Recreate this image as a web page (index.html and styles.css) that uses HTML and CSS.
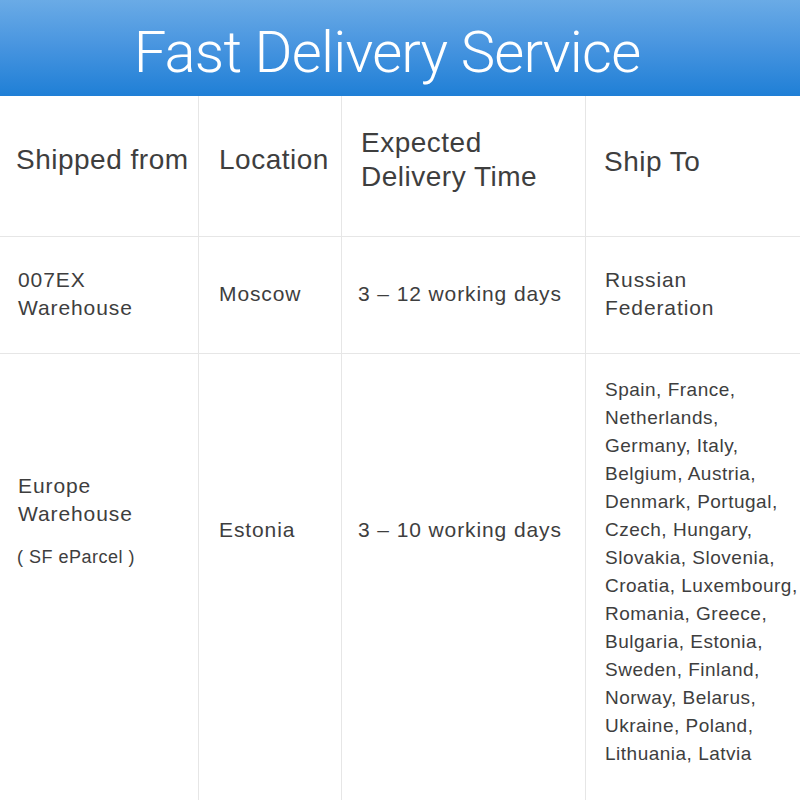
FILE: index.html
```
<!DOCTYPE html>
<html>
<head>
<meta charset="utf-8">
<link rel="stylesheet" href="styles.css">
</head>
<body>
<div class="page">
  <header class="banner"><h1 class="title">Fast Delivery Service</h1></header>
  <div class="table">
    <div class="cell head c1">Shipped from</div>
    <div class="cell head c2">Location</div>
    <div class="cell head c3">Expected<br>Delivery Time</div>
    <div class="cell head c4">Ship To</div>

    <div class="cell r2 c1">007EX<br>Warehouse</div>
    <div class="cell r2 c2">Moscow</div>
    <div class="cell r2 c3">3 – 12 working days</div>
    <div class="cell r2 c4">Russian<br>Federation</div>

    <div class="cell r3 c1 r3-left">Europe<br>Warehouse<span class="sub">( SF eParcel )</span></div>
    <div class="cell r3 c2 r3-mid">Estonia</div>
    <div class="cell r3 c3 r3-mid">3 – 10 working days</div>
    <div class="cell r3 c4 list">Spain, France,<br>Netherlands,<br>Germany, Italy,<br>Belgium, Austria,<br>Denmark, Portugal,<br>Czech, Hungary,<br>Slovakia, Slovenia,<br>Croatia, Luxembourg,<br>Romania, Greece,<br>Bulgaria, Estonia,<br>Sweden, Finland,<br>Norway, Belarus,<br>Ukraine, Poland,<br>Lithuania, Latvia</div>
  </div>
</div>
</body>
</html>
```
FILE: styles.css
```
html, body { margin: 0; padding: 0; background: #fff; }
body { width: 800px; height: 800px; overflow: hidden; font-family: "Liberation Sans", Arial, sans-serif; color: #3e3e3e; }
.page { width: 800px; }
.banner {
  height: 96px;
  background: linear-gradient(to bottom, #6aabe6 0%, #4a96e0 45%, #1f7fd6 100%);
  display: flex; justify-content: center; align-items: flex-start;
}
.title {
  margin: 0; padding-top: 17px; margin-right: 26px;
  font-family: Roboto, "Liberation Sans", sans-serif; font-weight: 300;
  font-size: 58px; line-height: 70px; letter-spacing: -0.8px;
  color: #fff;
}
.table {
  display: grid;
  grid-template-columns: 198px 143px 244px 215px;
  grid-template-rows: 141px 117px 460px;
}
.cell {
  border-left: 1px solid #e6e6e6;
  border-bottom: 1px solid #e6e6e6;
  display: flex; flex-direction: column; justify-content: center;
  font-size: 21px; line-height: 28px;
  padding: 0 0 0 18px;
  box-sizing: border-box;
  letter-spacing: 0.9px;
}
.c1 { border-left: none; padding-left: 18px; }
.c2 { padding-left: 20px; }
.c3 { padding-left: 16px; }
.c4 { padding-left: 19px; }
.head { font-size: 28px; line-height: 34px; letter-spacing: 0.5px; padding-bottom: 12px; }
.head.c1 { padding-left: 16px; }
.head.c3 { padding-left: 19px; padding-bottom: 12px; }
.head.c4 { padding-left: 18px; padding-bottom: 8px; }
.r2 { padding-bottom: 3px; }
.r3 { border-bottom: none; justify-content: flex-start; }
.r3-left { padding-top: 118px; }
.r3-mid { padding-top: 162px; }
.sub { display: block; font-size: 18px; line-height: 24px; margin-top: 17px; margin-left: -1px; letter-spacing: 0.5px; }
.list { font-size: 19px; line-height: 28px; padding-top: 22px; letter-spacing: 0.5px; }
```
